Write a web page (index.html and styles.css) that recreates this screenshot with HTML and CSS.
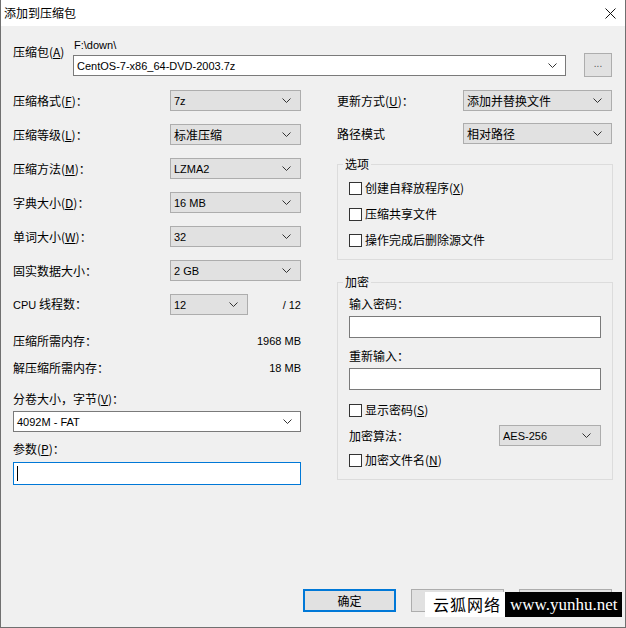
FILE: index.html
```html
<!DOCTYPE html>
<html lang="zh-CN">
<head>
  <meta charset="UTF-8" />
  <title>添加到压缩包</title>
  <link rel="stylesheet" href="styles.css">
</head>
<body>
  <div class="janela">
    <div class="barra-titulo">
      <span>添加到压缩包</span>
      <svg class="fechar" width="11" height="11" viewBox="0 0 11 11">
        <line x1="0.5" y1="0.5" x2="10.5" y2="10.5" />
        <line x1="10.5" y1="0.5" x2="0.5" y2="10.5" />
      </svg>
    </div>

    <div class="conteudo">
      <!-- Nome do pacote -->
      <div class="linha-pacote">
        <span class="rotulo-pacote">压缩包(<u>A</u>)</span>
        <div class="pacote">
          <div class="caminho lat">F:\down\</div>
          <div class="combo combo-pacote">
            <span class="lat">CentOS-7-x86_64-DVD-2003.7z</span>
            <svg class="seta" width="9" height="5" viewBox="0 0 9 5"><polyline points="0.5,0.5 4.5,4.5 8.5,0.5" /></svg>
          </div>
        </div>
        <div class="btn-procurar">...</div>
      </div>

      <div class="principal">
        <!-- Coluna esquerda -->
        <div class="coluna-esq">
          <div class="campo">
            <span>压缩格式(<u>F</u>)：</span>
            <div class="select"><span class="lat">7z</span><svg class="seta" width="9" height="5" viewBox="0 0 9 5"><polyline points="0.5,0.5 4.5,4.5 8.5,0.5" /></svg></div>
          </div>
          <div class="campo">
            <span>压缩等级(<u>L</u>)：</span>
            <div class="select"><span>标准压缩</span><svg class="seta" width="9" height="5" viewBox="0 0 9 5"><polyline points="0.5,0.5 4.5,4.5 8.5,0.5" /></svg></div>
          </div>
          <div class="campo">
            <span>压缩方法(<u>M</u>)：</span>
            <div class="select"><span class="lat">LZMA2</span><svg class="seta" width="9" height="5" viewBox="0 0 9 5"><polyline points="0.5,0.5 4.5,4.5 8.5,0.5" /></svg></div>
          </div>
          <div class="campo">
            <span>字典大小(<u>D</u>)：</span>
            <div class="select"><span class="lat">16 MB</span><svg class="seta" width="9" height="5" viewBox="0 0 9 5"><polyline points="0.5,0.5 4.5,4.5 8.5,0.5" /></svg></div>
          </div>
          <div class="campo">
            <span>单词大小(<u>W</u>)：</span>
            <div class="select"><span class="lat">32</span><svg class="seta" width="9" height="5" viewBox="0 0 9 5"><polyline points="0.5,0.5 4.5,4.5 8.5,0.5" /></svg></div>
          </div>
          <div class="campo">
            <span>固实数据大小：</span>
            <div class="select"><span class="lat">2 GB</span><svg class="seta" width="9" height="5" viewBox="0 0 9 5"><polyline points="0.5,0.5 4.5,4.5 8.5,0.5" /></svg></div>
          </div>
          <div class="campo">
            <span><span class="lat">CPU</span> 线程数：</span>
            <div class="select select-cpu"><span class="lat">12</span><svg class="seta" width="9" height="5" viewBox="0 0 9 5"><polyline points="0.5,0.5 4.5,4.5 8.5,0.5" /></svg></div>
            <span class="total-cpu lat">/ 12</span>
          </div>

          <div class="memoria mem-1"><span>压缩所需内存：</span><span class="lat">1968 MB</span></div>
          <div class="memoria mem-2"><span>解压缩所需内存：</span><span class="lat">18 MB</span></div>

          <div class="rotulo rotulo-volume">分卷大小，字节(<u>V</u>)：</div>
          <div class="combo combo-volume">
            <span class="lat">4092M - FAT</span>
            <svg class="seta" width="9" height="5" viewBox="0 0 9 5"><polyline points="0.5,0.5 4.5,4.5 8.5,0.5" /></svg>
          </div>

          <div class="rotulo rotulo-param">参数(<u>P</u>)：</div>
          <div class="input-param"><span class="cursor"></span></div>
        </div>

        <!-- Coluna direita -->
        <div class="coluna-dir">
          <div class="campo-dir">
            <span>更新方式(<u>U</u>)：</span>
            <div class="select select-dir"><span>添加并替换文件</span><svg class="seta" width="9" height="5" viewBox="0 0 9 5"><polyline points="0.5,0.5 4.5,4.5 8.5,0.5" /></svg></div>
          </div>
          <div class="campo-dir campo-caminho">
            <span>路径模式</span>
            <div class="select select-dir"><span>相对路径</span><svg class="seta" width="9" height="5" viewBox="0 0 9 5"><polyline points="0.5,0.5 4.5,4.5 8.5,0.5" /></svg></div>
          </div>

          <fieldset class="grupo grupo-opcoes">
            <legend>选项</legend>
            <div class="opcao"><span class="caixa"></span>创建自释放程序(<u>X</u>)</div>
            <div class="opcao"><span class="caixa"></span>压缩共享文件</div>
            <div class="opcao"><span class="caixa"></span>操作完成后删除源文件</div>
          </fieldset>

          <fieldset class="grupo grupo-senha">
            <legend>加密</legend>
            <div class="rotulo-senha">输入密码：</div>
            <div class="input-senha"></div>
            <div class="rotulo-senha rotulo-repetir">重新输入：</div>
            <div class="input-senha"></div>
            <div class="opcao opcao-mostrar"><span class="caixa"></span>显示密码(<u>S</u>)</div>
            <div class="campo-metodo">
              <span>加密算法：</span>
              <div class="select select-aes"><span class="lat">AES-256</span><svg class="seta" width="9" height="5" viewBox="0 0 9 5"><polyline points="0.5,0.5 4.5,4.5 8.5,0.5" /></svg></div>
            </div>
            <div class="opcao opcao-nomes"><span class="caixa"></span>加密文件名(<u>N</u>)</div>
          </fieldset>
        </div>
      </div>
    </div>

    <!-- Os outros dois botoes ficam por baixo da marca d'agua -->
    <div class="rodape">
      <div class="btn btn-ok">确定</div>
      <div class="btn"></div>
      <div class="btn"></div>
    </div>

    <div class="marca">
      <span class="marca-nome">云狐网络</span>
      <span class="marca-site">www.yunhu.net</span>
    </div>
  </div>
</body>
</html>
```

FILE: styles.css
```css
* {
  box-sizing: border-box;
}

body {
  margin: 0;
  background: #f0f0f0;
  font-family: "Noto Sans CJK SC", sans-serif;
  font-size: 12px;
  line-height: 16px;
  color: #000;
}

/* texto latino: mais estreito, como o Segoe UI */
.lat {
  font-family: "Liberation Sans", sans-serif;
  font-size: 11px;
}

u {
  text-decoration: underline;
  text-underline-offset: 1px;
}

.janela {
  position: relative;
  width: 626px;
  height: 628px;
  background: #f0f0f0;
  border: 1px solid #707070;
  border-top: none;
  display: flex;
  flex-direction: column;
}

/* Barra de titulo */
.barra-titulo {
  height: 26px;
  background: #fff;
  display: flex;
  align-items: center;
  justify-content: space-between;
  padding: 0 9px 0 3px;
}

.fechar {
  display: block;
  stroke: #111;
  stroke-width: 1;
}

.conteudo {
  padding: 11px 12px 0 12px;
}

/* Linha do pacote */
.linha-pacote {
  display: flex;
  align-items: flex-start;
}

.rotulo-pacote {
  width: 60px;
  margin-top: 7px;
}

.pacote {
  width: 493px;
}

.caminho {
  padding-left: 1px;
}

.combo {
  height: 21px;
  background: #fff;
  border: 1px solid #7a7a7a;
  display: flex;
  align-items: center;
  justify-content: space-between;
  padding: 0 8px 0 3px;
}

.combo-pacote {
  margin-top: 2px;
}

.seta {
  display: block;
  fill: none;
  stroke: #333;
  stroke-width: 1;
}

.btn-procurar {
  width: 28px;
  height: 24px;
  margin: 16px 0 0 18px;
  background: #e1e1e1;
  border: 1px solid #adadad;
  text-align: center;
  line-height: 20px;
  color: #555;
  font-family: "Liberation Sans", sans-serif;
  font-size: 10px;
}

.principal {
  display: flex;
  gap: 36px;
  margin-top: 13px;
}

/* Coluna esquerda */
.coluna-esq {
  width: 288px;
}

.campo {
  display: flex;
  align-items: center;
  height: 21px;
  margin-bottom: 13px;
}

.campo > span:first-child {
  width: 157px;
}

.select {
  height: 21px;
  background: #e1e1e1;
  border: 1px solid #adadad;
  display: flex;
  align-items: center;
  justify-content: space-between;
  padding: 0 9px 0 3px;
}

.coluna-esq .select {
  width: 131px;
}

.coluna-esq .select-cpu {
  width: 78px;
}

.total-cpu {
  margin-left: auto;
}

.memoria {
  display: flex;
  justify-content: space-between;
}

/* margem junta-se com os 13px da linha de cima */
.mem-1 {
  margin-top: 18px;
}

.mem-2 {
  margin-top: 11px;
}

.rotulo-volume {
  margin-top: 15px;
}

.combo-volume {
  margin-top: 4px;
}

.rotulo-param {
  margin-top: 9px;
}

.input-param {
  height: 23px;
  margin-top: 5px;
  background: #fff;
  border: 1px solid #0078d7;
  padding: 3px 0 0 3px;
}

.cursor {
  display: block;
  width: 1px;
  height: 15px;
  background: #000;
}

/* Coluna direita */
.coluna-dir {
  width: 276px;
}

.campo-dir {
  display: flex;
  align-items: center;
  justify-content: space-between;
  height: 21px;
  padding-right: 1px;
}

.campo-caminho {
  margin-top: 12px;
}

.select-dir {
  width: 149px;
}

.grupo {
  margin: 0;
  padding: 0 11px 9px 11px;
  border: 1px solid #dcdcdc;
  min-inline-size: 0;
}

.grupo legend {
  padding: 0 2px;
  margin-left: -6px;
  line-height: 16px;
}

.grupo-opcoes {
  margin-top: 12px;
}

.grupo-senha {
  margin-top: 14px;
}

.opcao {
  display: flex;
  align-items: center;
  height: 20px;
  margin-top: 6px;
}

.caixa {
  width: 13px;
  height: 13px;
  margin-right: 3px;
  background: #fff;
  border: 1px solid #333;
}

.rotulo-senha {
  margin-top: 6px;
}

.rotulo-repetir {
  margin-top: 10px;
}

.input-senha {
  height: 22px;
  margin-top: 4px;
  background: #fff;
  border: 1px solid #7a7a7a;
}

.opcao-mostrar {
  margin-top: 10px;
}

.campo-metodo {
  display: flex;
  align-items: center;
  justify-content: space-between;
  height: 21px;
  margin-top: 5px;
}

.select-aes {
  width: 102px;
}

.opcao-nomes {
  margin-top: 4px;
}

/* Botoes */
.rodape {
  margin-top: auto;
  display: flex;
  justify-content: flex-end;
  gap: 15px;
  padding: 0 13px 15px 0;
}

.btn {
  width: 93px;
  height: 23px;
  background: #e1e1e1;
  border: 1px solid #adadad;
  text-align: center;
  line-height: 21px;
}

.btn-ok {
  border: 2px solid #0078d7;
  line-height: 19px;
}

/* Marca d'agua */
.marca {
  position: absolute;
  left: 424px;
  top: 592px;
  height: 25px;
  display: flex;
  white-space: nowrap;
}

.marca-nome {
  width: 80px;
  background: #fff;
  font-size: 16px;
  line-height: 25px;
  letter-spacing: 1px;
  padding-left: 8px;
  color: #000;
}

.marca-site {
  width: 117px;
  background: #000;
  color: #fff;
  font-family: "Liberation Serif", serif;
  font-size: 17px;
  line-height: 25px;
  padding-left: 5px;
}
```
